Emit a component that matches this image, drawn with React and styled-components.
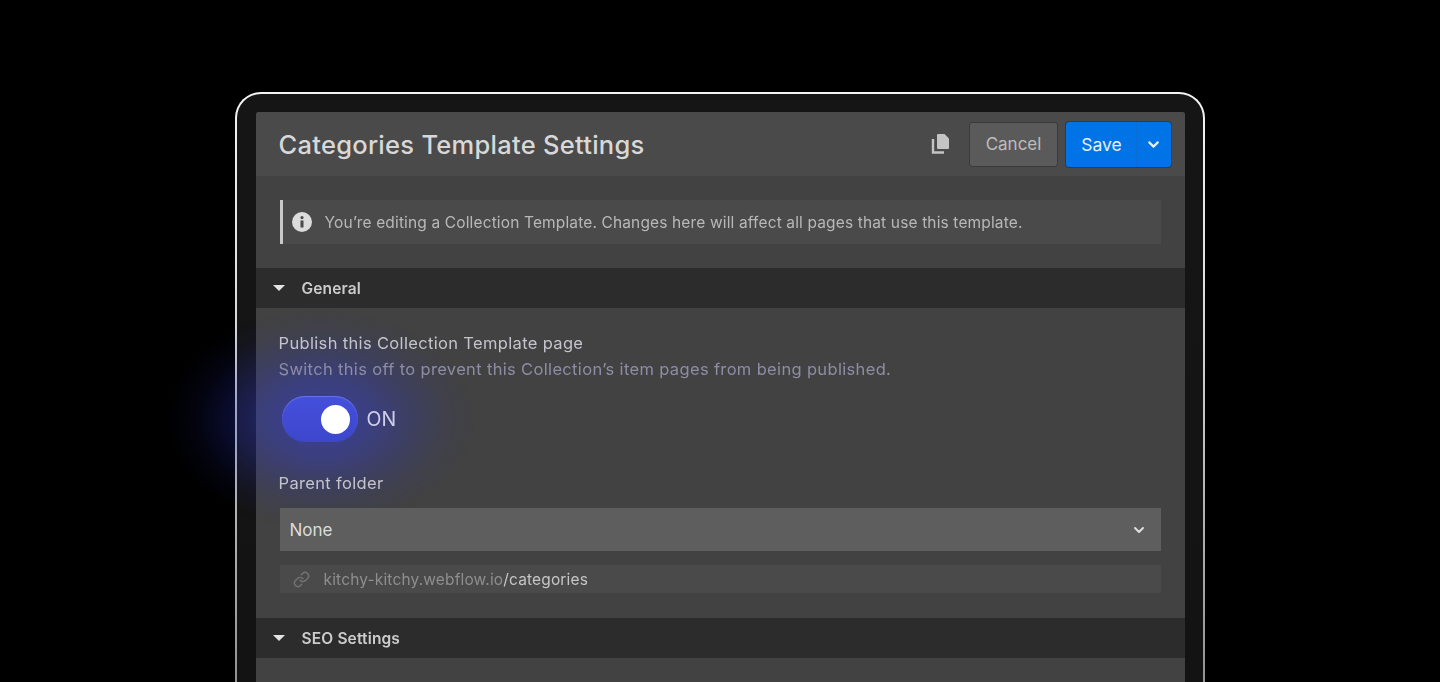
import React from 'react'
import styled, { createGlobalStyle } from 'styled-components'
import { ChevronDown, Link } from 'lucide-react'

const GlobalStyle = createGlobalStyle`
    html, body {
        margin: 0;
        padding: 0;
        background: #000;
        font-family: Inter, "Liberation Sans", sans-serif;
    }
`
const Page = styled.div`
    height: 682px;
    overflow: hidden;
    display: flex;
    justify-content: center;
    padding-top: 92px;
    box-sizing: border-box;
    background: #000;
`
const Frame = styled.div`
    width: 970px;
    height: 620px;
    box-sizing: border-box;
    border: 2.5px solid transparent;
    border-bottom: 0;
    border-radius: 26px 26px 0 0;
    padding: 18px 18.5px 0;
    filter: blur(0.35px);
    background: linear-gradient(#151515, #131313) padding-box, linear-gradient(#f4f4f4 0, #e0e0e0 30%, #8c8c8c 100%) border-box;
`
const Panel = styled.div`
    height: 100%;
    background: #424242;
    border-radius: 3px 3px 0 0;
    display: flex;
    flex-direction: column;
`
const Header = styled.header`
    height: 64px;
    flex-shrink: 0;
    display: flex;
    align-items: center;
    padding: 0 14px 0 23px;
    background: #4a4a4a;
    border-radius: 3px 3px 0 0;
`
const Title = styled.h1`
    margin: 0;
    flex: 1;
    font-size: 25.5px;
    font-weight: 500;
    letter-spacing: 0.27px;
    color: #d8d8d8;
`
const CopyIcon = styled.svg`
    width: 20px;
    height: 22px;
    margin-right: 18px;
    color: #c4c4c4;
`
const CancelButton = styled.button`
    width: 89px;
    height: 45px;
    margin-right: 8px;
    padding: 0 0 0 1px;
    border: 1px solid #3a3a3a;
    border-radius: 3px;
    background: #5a5a5a;
    color: #bdbdbd;
    font: 400 17px Inter, sans-serif;
`
const SaveGroup = styled.div`
    width: 105px;
    height: 45px;
    display: flex;
    border-radius: 3px;
    background: #0073e6;
    box-shadow: 0 0 0 1px #2f3a46;
    color: #e4f0fc;
    font-size: 17.5px;
`
const SaveLabel = styled.span`
    flex: 1;
    display: flex;
    align-items: center;
    justify-content: center;
    padding-left: 2px;
`
const SaveArrow = styled.span`
    width: 34px;
    display: flex;
    align-items: center;
    justify-content: center;
    border-left: 1px solid #0a6dd4;
`
const Notice = styled.div`
    height: 44px;
    margin: 24px;
    flex-shrink: 0;
    display: flex;
    align-items: center;
    gap: 13px;
    padding-left: 9px;
    border-left: 3px solid #c8c8c8;
    background: #4a4a4a;
    color: #b8b8b8;
    font-size: 15.5px;
    letter-spacing: 0.14px;
`
const InfoIcon = styled.svg`
    width: 20px;
    height: 20px;
    flex-shrink: 0;
`
const SectionHeader = styled.div`
    height: 40px;
    flex-shrink: 0;
    display: flex;
    align-items: center;
    gap: 17px;
    padding-left: 17px;
    background: #2c2c2c;
    color: #cccccc;
    font-size: 15.5px;
    font-weight: 600;
    letter-spacing: 0.15px;
`
const Triangle = styled.span`
    width: 0;
    height: 0;
    border-left: 6px solid transparent;
    border-right: 6px solid transparent;
    border-top: 6px solid #e4e4e4;
`
const SectionBody = styled.div`
    position: relative;
    padding: 24px 24px 25px 23px;
    display: flex;
    flex-direction: column;
`
const Glow = styled.div`
    position: absolute;
    left: -91px;
    top: 1px;
    width: 310px;
    height: 220px;
    pointer-events: none;
    background: radial-gradient(ellipse closest-side, rgba(50, 60, 220, 0.5) 0%, rgba(50, 60, 215, 0.42) 32%, rgba(45, 55, 210, 0.22) 58%, rgba(35, 50, 200, 0.07) 80%, rgba(30, 40, 200, 0) 100%);
`
const Label = styled.div`
    position: relative;
    font-size: 16.5px;
    line-height: 22px;
    letter-spacing: 0.34px;
    color: ${props => props.muted ? '#8d8da6' : '#c4c4cc'};
    margin-top: ${props => props.muted ? '4px' : '0'};
`
const ToggleRow = styled.div`
    position: relative;
    margin: 16px 0 30px 3px;
    display: flex;
    align-items: center;
    gap: 9px;
`
const Toggle = styled.div`
    width: 76px;
    height: 46px;
    padding-right: 8px;
    box-sizing: border-box;
    border-radius: 23px;
    display: flex;
    align-items: center;
    justify-content: flex-end;
    background: linear-gradient(180deg, #444fdc 0%, #3d47cc 100%);
    box-shadow: inset 0 1px 1px #6c74e8;
`
const Knob = styled.div`
    width: 29px;
    height: 29px;
    border-radius: 50%;
    background: #fff;
`
const ToggleText = styled.span`
    font-size: 19.5px;
    color: #cfd0ea;
`
const Select = styled.div`
    position: relative;
    height: 43px;
    margin: 14px 0 14px 1px;
    display: flex;
    align-items: center;
    justify-content: space-between;
    padding: 0 14px 0 10px;
    background: #5e5e5e;
    color: #dcdcdc;
    font-size: 17px;
`
const UrlField = styled.div`
    position: relative;
    height: 28px;
    margin-left: 1px;
    display: flex;
    align-items: center;
    gap: 14px;
    padding-left: 13px;
    background: #4a4a4a;
    color: #8e8e8e;
    font-size: 15.5px;
    letter-spacing: 0.15px;
`
const UrlPath = styled.span`
    color: #c6c6c6;
`

const App = () => {
    return (
        <Page>
            <GlobalStyle />
            <Frame>
                <Panel>
                    <Header>
                        <Title>Categories Template Settings</Title>
                        <CopyIcon viewBox="0 0 20 22">
                            <path d="M7 1h6.5L18 5.5V15a1 1 0 0 1-1 1H7a1 1 0 0 1-1-1V2a1 1 0 0 1 1-1z" fill="currentColor" />
                            <path d="M2 6v13.5h11" fill="none" stroke="currentColor" strokeWidth="2.4" />
                        </CopyIcon>
                        <CancelButton>Cancel</CancelButton>
                        <SaveGroup>
                            <SaveLabel>Save</SaveLabel>
                            <SaveArrow><ChevronDown size={17} strokeWidth={3} /></SaveArrow>
                        </SaveGroup>
                    </Header>
                    <Notice>
                        <InfoIcon viewBox="0 0 20 20">
                            <circle cx="10" cy="10" r="10" fill="#dcdcdc" />
                            <circle cx="10" cy="5.6" r="1.6" fill="#4a4a4a" />
                            <rect x="8.5" y="8.5" width="3" height="7" fill="#4a4a4a" />
                        </InfoIcon>
                        You’re editing a Collection Template. Changes here will affect all pages that use this template.
                    </Notice>
                    <SectionHeader><Triangle />General</SectionHeader>
                    <SectionBody>
                        <Glow />
                        <Label>Publish this Collection Template page</Label>
                        <Label muted>Switch this off to prevent this Collection’s item pages from being published.</Label>
                        <ToggleRow>
                            <Toggle><Knob /></Toggle>
                            <ToggleText>ON</ToggleText>
                        </ToggleRow>
                        <Label>Parent folder</Label>
                        <Select>None<ChevronDown size={16} strokeWidth={3} color="#dedede" /></Select>
                        <UrlField>
                            <Link size={17} color="#747474" />
                            <span>kitchy-kitchy.webflow.io<UrlPath>/categories</UrlPath></span>
                        </UrlField>
                    </SectionBody>
                    <SectionHeader><Triangle />SEO Settings</SectionHeader>
                </Panel>
            </Frame>
        </Page>
    )
}

export default App
